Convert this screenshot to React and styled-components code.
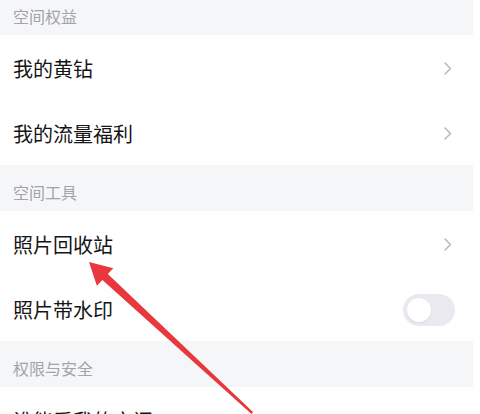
import React from "react";
import styled, { createGlobalStyle } from "styled-components";

const GlobalStyle = createGlobalStyle`
  body {
    margin: 0;
    background: #ffffff;
    font-family: "Noto Sans CJK SC", "Noto Sans", sans-serif;
    overflow: hidden;
  }
`;

const sections = [
  {
    title: "空间权益",
    items: [
      { label: "我的黄钻", type: "link" },
      { label: "我的流量福利", type: "link" },
    ],
  },
  {
    title: "空间工具",
    items: [
      { label: "照片回收站", type: "link" },
      { label: "照片带水印", type: "switch" },
    ],
  },
  {
    title: "权限与安全",
    items: [{ label: "谁能看我的空间", type: "link" }],
  },
];

const App = () => {
  return (
    <>
      <GlobalStyle />
      <Page>
        <List>
          {sections.map((section) => (
            <React.Fragment key={section.title}>
              <SectionHeader>{section.title}</SectionHeader>
              {section.items.map((item) => (
                <Row key={item.label}>
                  <RowLabel>{item.label}</RowLabel>
                  {item.type === "link" ? (
                    <Chevron width="9" height="15" viewBox="0 0 9 15">
                      <polyline points="2,2 7.5,7.5 2,13" />
                    </Chevron>
                  ) : (
                    <Switch>
                      <Knob />
                    </Switch>
                  )}
                </Row>
              ))}
            </React.Fragment>
          ))}
        </List>

        {/* 빨간 화살표 표시 */}
        <Arrow width="480" height="414" viewBox="0 0 480 414">
          <polygon points="89,262 113.3,268.2 107.8,274.1 253,412 251.5,414 102.4,279.9 96.9,285.8" />
        </Arrow>
      </Page>
    </>
  );
};

export default App;

const Page = styled.div`
  position: relative;
  width: 480px;
  height: 414px;
  overflow: hidden;
  background: #fff;
`;

const List = styled.div`
  display: flex;
  flex-direction: column;
  margin-top: -11px;
`;

const SectionHeader = styled.div`
  height: 46px;
  box-sizing: border-box;
  width: 473px;
  background: #f5f6f8;
  display: flex;
  align-items: flex-end;
  padding: 0 0 9px 13px;
  font-size: 16px;
  line-height: 20px;
  color: #a3a3a8;
`;

const Row = styled.div`
  height: 65px;
  display: flex;
  align-items: center;
  justify-content: space-between;
  padding: 2px 25px 0 13px;
  box-sizing: border-box;
  background: #fff;
`;

const RowLabel = styled.span`
  font-size: 20px;
  color: #151515;
`;

const Chevron = styled.svg`
  margin-right: 3px;
  polyline {
    fill: none;
    stroke: #b8b8bc;
    stroke-width: 1.5;
    stroke-linecap: round;
    stroke-linejoin: round;
  }
`;

const Switch = styled.div`
  width: 52px;
  height: 32px;
  border-radius: 16px;
  background: #e9e9ef;
  display: flex;
  align-items: center;
  padding-left: 4px;
  box-sizing: border-box;
`;

const Knob = styled.div`
  width: 24px;
  height: 24px;
  border-radius: 50%;
  background: #fff;
  box-shadow: 0 1px 2px rgba(0, 0, 0, 0.08);
`;

const Arrow = styled.svg`
  position: absolute;
  top: 0;
  left: 0;
  pointer-events: none;
  polygon {
    fill: #e8383d;
  }
`;
